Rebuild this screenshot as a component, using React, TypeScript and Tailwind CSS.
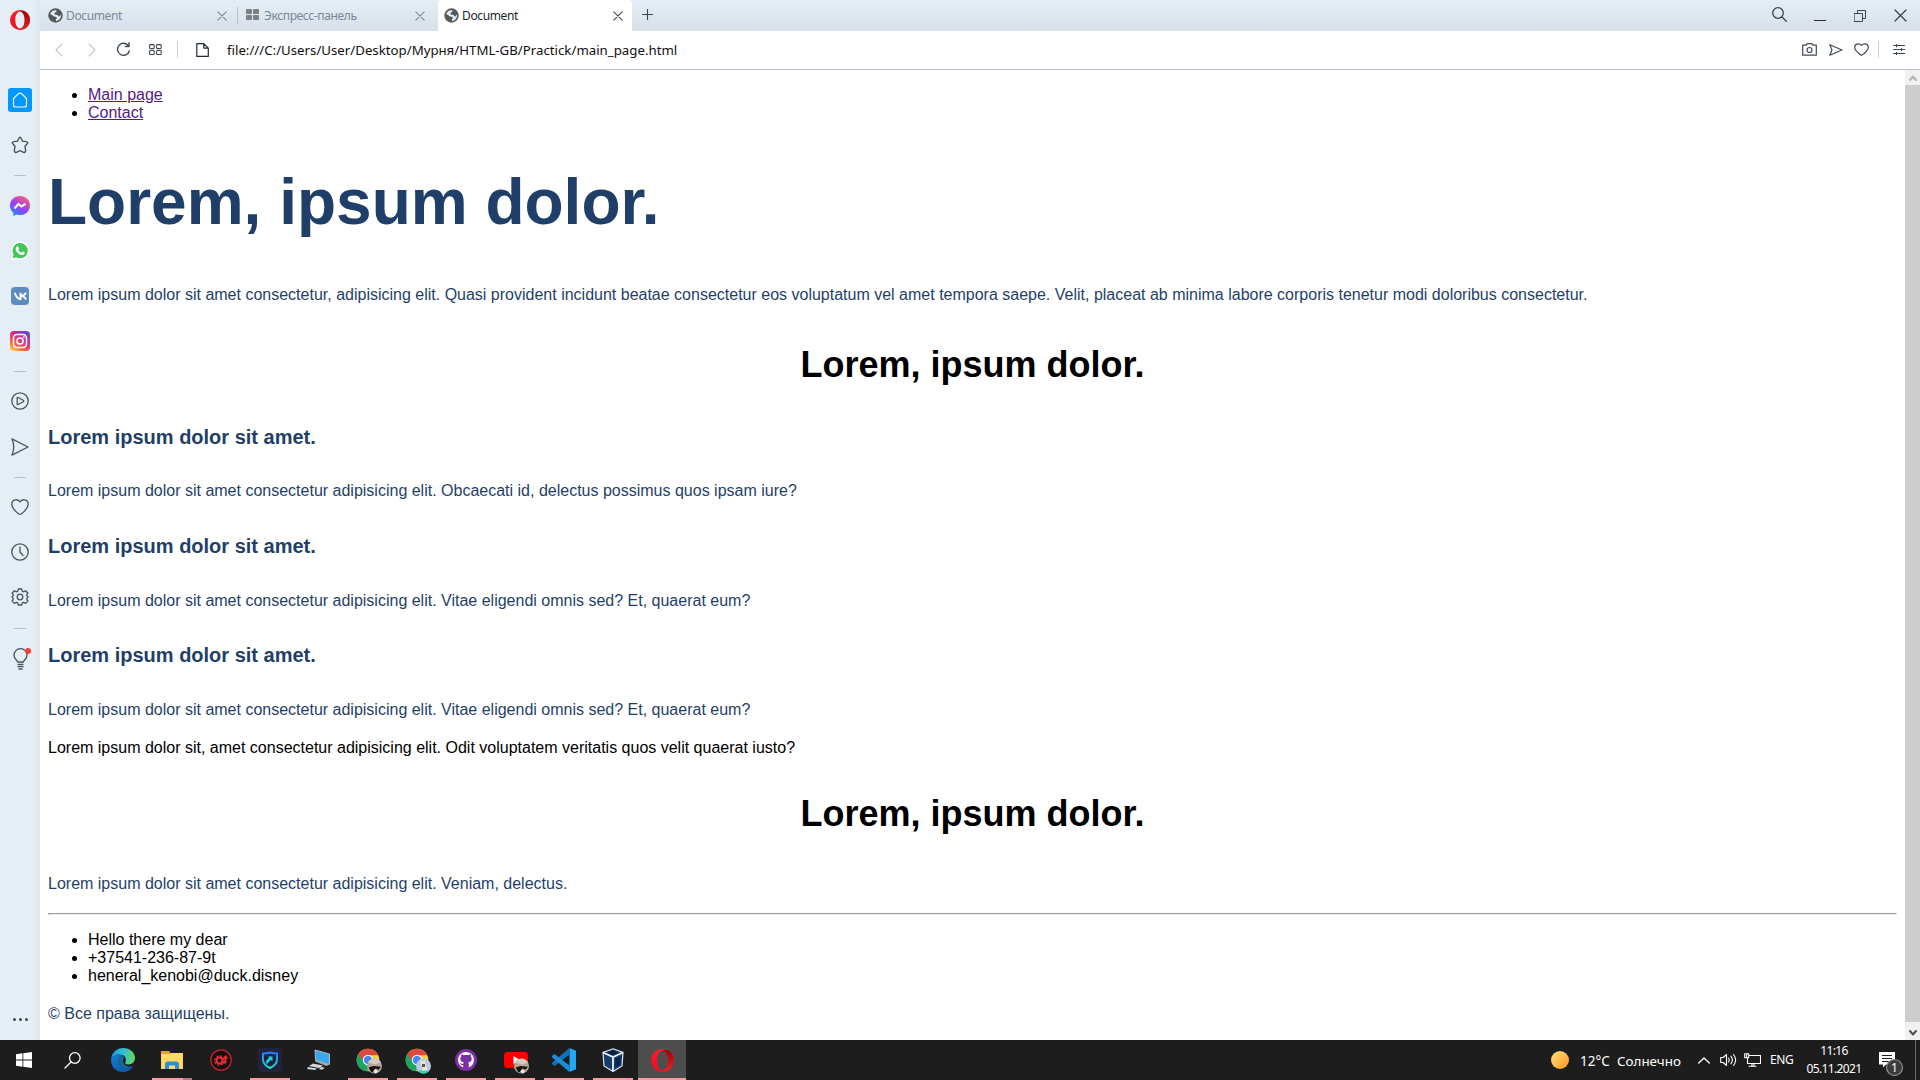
import React from "react";

const stroke = { fill: "none", stroke: "currentColor", strokeLinecap: "round", strokeLinejoin: "round" } as const;

function Svg({ s, w, h, vb, sw = 1.3, className = "", children }: { s?: number; w?: number; h?: number; vb?: string; sw?: number; className?: string; children: React.ReactNode }) {
  const W = w ?? s ?? 20, H = h ?? s ?? 20;
  return <svg width={W} height={H} viewBox={vb ?? `0 0 ${W} ${H}`} strokeWidth={sw} {...stroke} className={`block shrink-0 ${className}`}>{children}</svg>;
}

function OperaLogo({ s }: { s: number }) {
  return (
    <svg width={s} height={s} viewBox="0 0 20 20" className="block shrink-0">
      <defs>
        <linearGradient id="opA" x1="0" y1="0" x2="0" y2="1"><stop offset="0" stopColor="#ff1b2d" /><stop offset="1" stopColor="#e60f20" /></linearGradient>
        <linearGradient id="opB" x1="0" y1="0" x2="0" y2="1"><stop offset="0" stopColor="#9c0000" /><stop offset="1" stopColor="#d82a2a" /></linearGradient>
      </defs>
      <path fillRule="evenodd" fill="url(#opA)" d="M10 0a10 10 0 1 0 0 20a10 10 0 1 0 0-20ZM10 1.6c2.7 0 4.7 3.6 4.7 8.4s-2 8.4-4.7 8.4s-4.7-3.6-4.7-8.4s2-8.4 4.7-8.4Z" />
      <path fill="url(#opB)" d="M10 1.6c2-1.6 4.6-1 6.7 1A10 10 0 0 1 16.7 17.4c-2.1 2-4.7 2.6-6.7 1c2.7 0 4.7-3.6 4.7-8.4s-2-8.4-4.7-8.4Z" />
    </svg>
  );
}

function Globe() {
  return (
    <svg width="15" height="15" viewBox="0 0 15 15" className="block shrink-0">
      <circle cx="7.5" cy="7.5" r="7.2" fill="#55585b" />
      <path d="M2 6.6C3 3.5 5.2 2 8.2 2.3L8.6 3.6L6.3 5l.5 1.4l2.6.5l1.7 1.9l2-2.2c.2 3.500-2.100 6.100-5 6.400L7.700 11.500L9 10.300L8.400 8.900L5.400 8.300L3.800 6.500Z" fill="#e6edf4" />
    </svg>
  );
}

const X = ({ c }: { c: string }) => <Svg s={10} sw={1.1} className={c}><path d="M.8 .8L9.200 9.200M9.200 .8L.8 9.200" /></Svg>;

function TabBar() {
  return (
    <div className="flex h-[31px] shrink-0 items-stretch bg-linear-to-b from-[#e5edf5] to-[#d7dfe8] text-[12px] tracking-[-0.36px]">
      <div className="flex w-[197px] items-center pl-2 text-[#7a8796]">
        <Globe /><span className="ml-[3px] w-[151px]">Document</span><X c="text-[#7f8893]" />
      </div>
      <div className="my-[7px] w-px bg-[#b6c2cf]" />
      <div className="flex w-[200px] items-center pl-2 text-[#7a8796]">
        <svg width="13" height="11" viewBox="0 0 13 11" fill="#7c8085" className="mb-0.5 block"><rect width="6" height="5" rx="1" /><rect x="7" width="6" height="5" rx="1" /><rect y="6" width="6" height="5" rx="1" /><rect x="7" y="6" width="6" height="5" rx="1" /></svg>
        <span className="ml-[5px] w-[151px]">Экспресс-панель</span><X c="text-[#7f8893]" />
      </div>
      <div className="flex w-[194px] items-center rounded-t-sm bg-white pl-1.5 text-[#1c232c]">
        <Globe /><span className="ml-[3px] w-[151px]">Document</span><X c="text-[#3c434b]" />
      </div>
      <div className="flex items-center pb-0.5 pl-2.5 text-[#3c434b]"><Svg s={11} sw={1.1}><path d="M5.500 .5v10M.5 5.500h10" /></Svg></div>
      <div className="ml-auto flex items-center gap-7 pr-[13px] text-[#3c434b]">
        <Svg s={15} sw={1.3} className="-mr-px mb-[3px]"><circle cx="6" cy="6" r="5.300" /><path d="M10 10l4.300 4.300" /></Svg>
        <div className="mt-2.5 h-px w-3 bg-[#303030]" />
        <Svg s={12} sw={1}><path d="M.5 3.500h8v8h-8ZM3.500 3.500v-3h8v8h-3" /></Svg>
        <Svg s={13} sw={1.3}><path d="M1 1l11 11M12 1L1 12" /></Svg>
      </div>
    </div>
  );
}

function AddressBar() {
  return (
    <div className="flex h-[39px] shrink-0 items-center border-b border-[#b3bfca] bg-white pb-px text-[#414a54]">
      <Svg w={8} h={14} sw={1.1} className="ml-[15px] text-[#c2c6ca]"><path d="M7 1L1 7l6 6" /></Svg>
      <Svg w={8} h={14} sw={1.1} className="ml-[25px] text-[#c2c6ca]"><path d="M1 1l6 6l-6 6" /></Svg>
      <Svg s={15} sw={1.4} className="ml-5"><path d="M12 3.300A6 6 0 1 0 13.300 9M13 .8v3.700H9.300" /></Svg>
      <Svg w={13} h={11} sw={1.1} className="ml-[18px]"><rect x=".6" y=".6" width="4.600" height="4" rx=".8" /><rect x="7.600" y=".6" width="4.600" height="4" rx=".8" /><rect x=".6" y="6.500" width="4.600" height="4" rx=".8" /><rect x="7.600" y="6.500" width="4.600" height="4" rx=".8" /></Svg>
      <div className="ml-[15px] h-[17px] w-px bg-[#c9ced3]" />
      <Svg w={13} h={14} sw={1.2} className="ml-[18px] text-[#1f2a35]"><path d="M.8 .6h7l4.500 4.500v8.300H.8ZM7.800 .6v4.500h4.500" /></Svg>
      <span className="mt-0.5 ml-[18px] text-[13.25px] text-[#101010]">file:///C:/Users/User/Desktop/Мурня/HTML-GB/Practick/main_page.html</span>
      <div className="ml-auto flex items-center pr-[15px]">
        <Svg w={15} h={13} sw={1.2}><path d="M.7 2.200h3.500l1-1.500h4.600l1 1.500h3.500v10H.7Z" /><circle cx="7.500" cy="7" r="2.500" /></Svg>
        <Svg w={14} h={12} sw={1.2} className="ml-3"><path d="M.8 .8L13 6L.8 11.200L3 6Z" /></Svg>
        <Svg w={15} h={13} sw={1.2} className="ml-[11px]"><path d="M7.500 2.500C6 0 .7 0 .7 4.500c0 3.300 4 6 6.800 7.900c2.800-1.900 6.800-4.600 6.800-7.900C14.300 0 9 0 7.500 2.500Z" /></Svg>
        <div className="ml-[9px] h-[17px] w-px bg-[#c9ced3]" />
        <Svg w={12} h={11} sw={1.1} className="ml-3.5"><path d="M.5 1.500h11M.5 5.500h11M.5 9.500h11M3.500 .3v2.400M8.500 4.300v2.400M3.500 8.300v2.400" /></Svg>
      </div>
    </div>
  );
}

const Sep = ({ c }: { c: string }) => <div className={`h-px w-3 shrink-0 bg-[#b4c0cd] ${c}`} />;

function Sidebar() {
  return (
    <aside className="flex w-10 shrink-0 flex-col items-center bg-linear-to-r from-[#e5edf5] from-85% to-[#dce4ec] text-[#4a545f]">
      <div className="flex h-10 flex-col pt-2.5"><OperaLogo s={20} /></div>
      <div className="mt-12 flex h-6 w-6 shrink-0 items-center justify-center rounded-[3px] bg-[#0097ff] text-white"><Svg s={16} sw={1.2}><path d="M1.500 6.500L6.500 1.600Q8 .6 9.500 1.600L14.500 6.500V13Q14.500 15 12.500 15h-9Q1.500 15 1.500 13Z" /></Svg></div>
      <Svg s={18} sw={1.4} className="mt-6"><path d="M9 1.300Q9.700 1.300 10.200 2.500L11.500 5.100L15 5.600Q17.800 6.200 16 8L14 10.300L14.600 14Q14.800 17 12.500 16.300L9 14.700L5.500 16.300Q3.200 17 3.400 14L4 10.300L2 8Q.2 6.200 3 5.600L6.500 5.100L7.800 2.500Q8.300 1.300 9 1.300Z" /></Svg>
      <Sep c="mt-[21px]" />
      <svg width="20" height="20" viewBox="0 0 20 20" className="mt-5 block shrink-0"><defs><linearGradient id="ms" x1=".2" y1="1" x2=".8" y2="0"><stop stopColor="#1292ff" /><stop offset=".45" stopColor="#9a3cf8" /><stop offset="1" stopColor="#ff6070" /></linearGradient></defs><path fill="url(#ms)" d="M10 0C4.300 0 0 4 0 9.500c0 3 1.200 5.400 3.300 7V20l3-1.500c1 .4 2.300.6 3.700.6c5.700 0 10-4 10-9.600S15.700 0 10 0Z" /><path d="M4.500 12.400l4-4.400l3 2.500l4-2.700" fill="none" stroke="#fff" strokeWidth="2.200" /></svg>
      <svg width="18" height="18" viewBox="0 0 18 18" className="mt-[26px] block shrink-0"><path d="M.7 17.300l1.200-4.600A8.300 8.300 0 1 1 5.300 16Z" fill="#45c65a" stroke="#fff" strokeWidth="1.300" /><path fill="#fff" d="M6 4.500c1-.6 1.300 0 2 2c.2.800-.8 1-.6 1.600c.8 1.500 1.700 2 2.900 2.600c.6-.2 1-1.300 1.500-1.100l1.900 1c.3 2-1.700 2.700-3 2.400C7.500 12.300 5 9.700 4.700 7.200c0-1 .5-2.200 1.300-2.700Z" /></svg>
      <div className="mt-[27px] flex h-[18px] w-[18px] shrink-0 items-center justify-center rounded-[4px] bg-[#5c8bc0]"><svg width="13" height="8" viewBox="0 0 13 8" fill="none" stroke="#fff" strokeWidth="1.900"><path d="M.8 .8C2 4.500 3.800 7 6.500 7V.8M12 .8C11 2.500 9 3.700 7 3.900C9 4 11 5.500 12.200 7.400" /></svg></div>
      <svg width="20" height="20" viewBox="0 0 20 20" className="mt-[26px] block shrink-0"><defs><linearGradient id="ig" x1=".15" y1="1" x2=".8" y2="0"><stop stopColor="#ffc850" /><stop offset=".3" stopColor="#f66040" /><stop offset=".65" stopColor="#cd2d94" /><stop offset="1" stopColor="#5952d4" /></linearGradient></defs><rect width="20" height="20" rx="4" fill="url(#ig)" /><g fill="none" stroke="#fff" strokeWidth="1.500"><rect x="3.500" y="3.500" width="13" height="13" rx="3.500" /><circle cx="10" cy="10" r="3.100" /></g><circle cx="13.900" cy="6.100" r=".9" fill="#fff" /></svg>
      <Sep c="mt-5" />
      <Svg s={18} className="mt-5 mr-px"><circle cx="9" cy="9" r="8.200" /><path d="M6.200 6.200Q6.200 5.300 7 5.500L12.300 8.300Q13.300 9 12.300 9.700L7 12.500Q6.200 12.700 6.200 11.800Z" /></Svg>
      <Svg w={18} h={18} className="mt-7 mr-px"><path d="M1 .9L17 9L1 17.100Q4.500 9 1 .9Z" /></Svg>
      <Sep c="mt-[21px]" />
      <Svg w={18} h={16} className="mt-[21px] mr-px"><path d="M9 3C7.500 -.3 .8 -.3 .8 5.300C.8 9 4.500 12.500 7.800 15Q9 15.700 10.200 15C13.500 12.500 17.200 9 17.200 5.300C17.200-.3 10.500-.3 9 3Z" /></Svg>
      <Svg s={18} className="mt-7 mr-px"><circle cx="9" cy="9" r="8.200" /><path d="M9 4v5l3 3.600" /></Svg>
      <Svg s={18} className="mt-[27px] mr-px"><path d="M7.300 1h3.400l.5 2.200l1.400.6l2-1.100L16.900 5l-1.200 1.900l.5 1.300l.9.800l-.9.900l-.5 1.300l1.200 1.900l-2.300 2.300l-2-1.100l-1.400.6l-.5 2.100H7.300l-.5-2.100l-1.400-.6l-2 1.100l-2.300-2.300l1.200-1.900l-.5-1.300l-.9-.9l.9-.8l.5-1.300L1.100 5l2.300-2.300l2 1.100l1.400-.6Z" /><circle cx="9" cy="9" r="2.800" /></Svg>
      <Sep c="mt-[22px]" />
      <svg width="20" height="22" viewBox="0 0 20 22" className="mt-[19px] ml-px block shrink-0" {...stroke} strokeWidth="1.300"><path d="M7.500 14C7.500 12 4 11 4 7.200a6.500 6.500 0 0 1 13 0C17 11 13.500 12 13.500 14ZM8 16.500h5M8 18.700h5M9 21h3" transform="translate(-1 0)" /><circle cx="17.200" cy="3" r="3" fill="#ff3b30" stroke="none" /></svg>
      <div className="mt-auto mb-[19px] flex gap-[3px]"><i className="h-[3px] w-[3px] rounded-full bg-[#414a54]" /><i className="h-[3px] w-[3px] rounded-full bg-[#414a54]" /><i className="h-[3px] w-[3px] rounded-full bg-[#414a54]" /></div>
    </aside>
  );
}

function Page() {
  return (
    <main className="flow-root flex-1 bg-white px-2 font-['Liberation_Sans',Arial,sans-serif] text-[16px] leading-[18px] text-black">
      <ul className="mt-4 list-disc pl-10 text-black">
        <li><a className="text-[#551a8b] underline">Main page</a></li>
        <li><a className="text-[#551a8b] underline">Contact</a></li>
      </ul>
      <h1 className="mt-[43px] text-[64px] leading-[74px] font-bold text-[#1f3f68]">Lorem, ipsum dolor.</h1>
      <p className="mt-[47px] text-[#1f3f68]">Lorem ipsum dolor sit amet consectetur, adipisicing elit. Quasi provident incidunt beatae consectetur eos voluptatum vel amet tempora saepe. Velit, placeat ab minima labore corporis tenetur modi doloribus consectetur.</p>
      <h2 className="mt-10 text-center text-[36px] leading-[42px] font-bold">Lorem, ipsum dolor.</h2>
      <h3 className="mt-[39px] text-[20px] leading-[24px] font-bold text-[#1f3f68]">Lorem ipsum dolor sit amet.</h3>
      <p className="mt-[33px] text-[#1f3f68]">Lorem ipsum dolor sit amet consectetur adipisicing elit. Obcaecati id, delectus possimus quos ipsam iure?</p>
      <h3 className="mt-[34px] text-[20px] leading-[24px] font-bold text-[#1f3f68]">Lorem ipsum dolor sit amet.</h3>
      <p className="mt-[34px] text-[#1f3f68]">Lorem ipsum dolor sit amet consectetur adipisicing elit. Vitae eligendi omnis sed? Et, quaerat eum?</p>
      <h3 className="mt-[33px] text-[20px] leading-[24px] font-bold text-[#1f3f68]">Lorem ipsum dolor sit amet.</h3>
      <p className="mt-[34px] text-[#1f3f68]">Lorem ipsum dolor sit amet consectetur adipisicing elit. Vitae eligendi omnis sed? Et, quaerat eum?</p>
      <p className="mt-5">Lorem ipsum dolor sit, amet consectetur adipisicing elit. Odit voluptatem veritatis quos velit quaerat iusto?</p>
      <h2 className="mt-9 text-center text-[36px] leading-[42px] font-bold">Lorem, ipsum dolor.</h2>
      <p className="mt-10 text-[#1f3f68]">Lorem ipsum dolor sit amet consectetur adipisicing elit. Veniam, delectus.</p>
      <div className="mt-5 h-0.5 border border-[#9a9a9a] border-r-[#eee] border-b-[#eee]" />
      <ul className="mt-4 list-disc pl-10">
        <li>Hello there my dear</li>
        <li>+37541-236-87-9t</li>
        <li>heneral_kenobi@duck.disney</li>
      </ul>
      <p className="mt-5 text-[#1f3f68]">© Все права защищены.</p>
    </main>
  );
}

function Scrollbar() {
  return (
    <div className="flex w-[15px] shrink-0 flex-col bg-[#cdcdcd]">
      <div className="flex h-[15px] items-center justify-center bg-[#f0f0f0] text-[#b4b4b4]"><Svg w={8} h={6} sw={2}><path d="M1 5l3-3.500l3 3.500" /></Svg></div>
      <div className="flex-1" />
      <div className="flex h-[18px] items-center justify-center bg-[#f0f0f0] pt-1 text-[#505050]"><Svg w={8} h={6} sw={2}><path d="M1 1l3 3.500l3-3.500" /></Svg></div>
    </div>
  );
}

function Chrome({ dog = false }: { dog?: boolean }) {
  return (
    <svg width="28" height="28" viewBox="0 0 28 28" className="mt-0.5 ml-[3px]">
      <circle cx="12" cy="13" r="11.300" fill="#ffcd40" />
      <path d="M12 13L2.200 7.300A11.300 11.300 0 0 0 11 24.300L17 15Z" fill="#1da362" />
      <path d="M2.200 7.300A11.300 11.300 0 0 1 22.300 8.300H12L7 14Z" fill="#db4a3d" />
      <circle cx="12" cy="13" r="5.200" fill="#fff" /><circle cx="12" cy="13" r="4.200" fill="#4687f4" />
      {dog ? <g><circle cx="18.500" cy="19" r="7.500" fill="#b9cbe4" /><path d="M12.500 23.500h12a7.500 7.500 0 0 1-12 0Z" fill="#35d0b8" /><path d="M15.500 12l1.500 2h2l1-1.500v4l2 3v4h-5v-4l-1.500-3Z" fill="#e9e2cf" /><path d="M17 17h3v3h-3Z" fill="#5d503f" /></g> : <Face />}
    </svg>
  );
}
const Face = () => <g><circle cx="18.500" cy="19" r="7.500" fill="#b5a596" /><path d="M12 15.500a7.500 7.500 0 0 1 13 0l-6 2Z" fill="#d6ccc3" /><path d="M12.500 20.500l5-1.500l7.500.7l-2.500 3l-3-1.500l-1.500 4.500l-3-1Z" fill="#16130f" /><path d="M17 25l2-3l3 2.500l-2 2Z" fill="#efe9e0" /></g>;

function Task({ line = "", gap = "ml-px", active = false, children }: { line?: string; gap?: string; active?: boolean; children: React.ReactNode }) {
  return (
    <div className={`flex h-10 w-12 shrink-0 flex-col items-center ${gap} ${active ? "bg-[#4d4d4d]" : ""}`}>
      <div className="flex h-[38px] items-center justify-center pt-0.5">{children}</div>
      <div className={`h-0.5 ${line}`} />
    </div>
  );
}

const pink = "w-10 bg-[#ff9ba5]";

function Taskbar() {
  return (
    <footer className="flex h-10 shrink-0 items-center bg-[#1d1d1d] font-['Noto_Sans','Open_Sans',sans-serif] text-[12px] text-white">
      <Task gap="ml-0"><svg width="16" height="16" viewBox="0 0 16 16" fill="#fff"><path d="M0 2.200L6.500 1.300V7.600H0ZM7.300 1.200L16 0V7.600H7.300ZM0 8.400h6.500v6.300L0 13.800ZM7.300 8.400H16V16l-8.700-1.200Z" /></svg></Task>
      <Task gap="ml-0"><Svg s={17} sw={1.3}><circle cx="10.800" cy="6" r="5.300" /><path d="M7 10L1 16" /></Svg></Task>
      <Task gap="ml-[3px]">
        <svg width="24" height="24" viewBox="0 0 24 24"><defs><linearGradient id="edA" x1="0" y1=".4" x2="1" y2=".5"><stop stopColor="#1a9de0" /><stop offset=".55" stopColor="#35c1cf" /><stop offset="1" stopColor="#66dd52" /></linearGradient><linearGradient id="edB" x1="0" y1="0" x2="1" y2="1"><stop stopColor="#1380d8" /><stop offset="1" stopColor="#0c4fa0" /></linearGradient></defs><path fill="url(#edA)" d="M.2 10.500C1 4.500 6 0 12 0c7 0 12 4.800 12 10c0 4-3.200 6.400-6.400 6.400c-2.600 0-3.800-1-3.300-2c1.300-2.400.6-6-3-7.300C6.800 5.600 2 7.400.2 10.500Z" /><path fill="url(#edB)" d="M.1 11C2 6.500 8 5 11.500 7.400C7 8.500 6 13 8.500 16.500c3 4 9 4.200 13.500 2c-2 3.400-5.800 5.500-10 5.500C5 24-.4 18.500.1 11Z" /><path fill="#1a8fd4" d="M11.500 7.400C7 8.500 6 13 8.500 16.500c3 4 9 4.200 13.500 2c-5 .6-10-1.500-10-5.500c0-1.300.6-2 1.500-3Z" opacity=".65" /></svg>
      </Task>
      <Task line="w-10 bg-linear-to-r from-[#ff9ba5] from-78% to-[#bd7780] to-78%">
        <svg width="22" height="18" viewBox="0 0 22 18"><path d="M0 0h8l1.500 2H22v16H0Z" fill="#e5a50e" /><path d="M0 3h9l1-1h12v16H0Z" fill="#ffd868" /><path d="M4 18v-5q0-2.500 2.500-2.500h9Q18 10.500 18 13v5h-4v-3.500H8V18Z" fill="#2f8fd8" /></svg>
      </Task>
      <Task><svg width="22" height="22" viewBox="0 0 22 22" fill="none" stroke="#ed2b2f"><circle cx="11" cy="11" r="10.200" fill="#151010" stroke="#c9252b" strokeWidth="1.200" /><circle cx="9.500" cy="11.500" r="3" strokeWidth="2" /><circle cx="9.500" cy="11.500" r="4.600" strokeWidth="1.400" strokeDasharray="2 1.600" /><path d="M11 13.500h4.500V8.500" strokeWidth="1.800" /><path d="M12.500 9.500L15.500 6L18.500 9.500Z" fill="#ed2b2f" stroke="none" /></svg></Task>
      <Task line={pink}><svg width="24" height="24" viewBox="0 0 24 24"><defs><linearGradient id="sh" x1="0" y1="0" x2="0" y2="1"><stop stopColor="#2979ff" /><stop offset="1" stopColor="#19e4d4" /></linearGradient></defs><rect width="24" height="24" rx="4" fill="#20233a" /><path d="M5 5.500Q9 5.500 12 4.500Q15 5.500 19 5.500V12Q18.500 17 12 20Q5.500 17 5 12Z" fill="none" stroke="url(#sh)" strokeWidth="2" /><path d="M8.500 16.500l4-4.500l2 1V8.500h-4.500l1.200 1.300L8 13Z" fill="#1cd5e8" /></svg></Task>
      <Task><svg width="24" height="22" viewBox="0 0 24 22"><path d="M8 1L22.500 5V15.500L8.500 11Z" fill="#3ba7ee" stroke="#a9bac5" /><path d="M8.500 11L22.500 15.500l-3 1.500L8 12.500Z" fill="#a0aab0" /><path d="M6 14.500l10 2l-4 2.500L2 17ZM1 18l9 1.500l-2 1.500L0 20ZM14 18l4 .8l-3 2l-3-.8Z" fill="#d3d8dc" /></svg></Task>
      <Task line={pink}><Chrome /></Task>
      <Task line={pink}><Chrome dog /></Task>
      <Task line={pink}>
        <svg width="22" height="22" viewBox="0 0 22 22"><circle cx="11" cy="11" r="11" fill="#7b2fa5" /><path fill="#fff" d="M11 3a8 8 0 0 0-2.800 15.500V16c-2 .4-2.700-1-3.200-1.800c1.200-.3 1.500 1 3.300.6c.1-.6.300-1 .6-1.200C6.500 13.200 5.300 12 5.300 9.800c0-1 .3-1.700.9-2.300c-.2-.6-.2-1.500.1-2.300c.9 0 1.700.5 2.400 1c1.500-.4 3.100-.4 4.600 0c.7-.5 1.500-1 2.400-1c.3.800.3 1.700.1 2.300c.6.600.9 1.300.9 2.300c0 2.200-1.200 3.400-3.600 3.800c.5.500.7 1.200.7 2.200v2.700A8 8 0 0 0 11 3Z" /></svg>
      </Task>
      <Task line={pink}><svg width="28" height="28" viewBox="0 0 28 28" className="mt-0.5 ml-[3px]"><rect x="1" y="5" width="24" height="16" rx="3.500" fill="#fe0000" /><path d="M10.500 9v8l6.500-4Z" fill="#fff" /><Face /></svg></Task>
      <Task line={pink}><svg width="24" height="24" viewBox="0 0 24 24"><path d="M17.500 0L24 2.800V21.200L17.500 24Z" fill="#24a7f2" /><path d="M17.500 0V6.500L2.500 18L0 16V14.800Z" fill="#0d74b8" /><path d="M17.500 24V17.500L2.500 6L0 8V9.200Z" fill="#1b8fd8" /></svg></Task>
      <Task line={pink}><svg width="22" height="24" viewBox="0 0 22 24"><path d="M11 .8L21 4.500L20 18L11 23.500L2 18L1 4.500Z" fill="#173b6b" stroke="#dfe6ee" strokeWidth="1.200" /><path d="M1 4.500L11 9L21 4.500M11 9V23" stroke="#eef2f6" strokeWidth="1.800" fill="none" /><path d="M5 4.700L11 2.500L17 4.700L11 7Z" fill="#0a1d3c" /><path d="M13.500 10.500L18.500 8L18 16.500L13.500 19Z" fill="#0b2348" /></svg></Task>
      <Task active line="w-12 bg-[#ff9ba5]"><OperaLogo s={23} /></Task>
      <div className="ml-auto flex h-10 items-center">
        <div className="h-[18px] w-[18px] rounded-full bg-linear-to-br from-[#ffe27a] to-[#ff9500]" />
        <span className="ml-[11px] w-[37px] pt-0.5 text-[13.5px] whitespace-nowrap">12°C</span>
        <span className="w-[74px] pt-0.5 text-[13.4px] whitespace-nowrap">Солнечно</span>
        <Svg w={12} h={7} sw={1.3} className="ml-[7px]"><path d="M.7 6L6 1l5.300 5" /></Svg>
        <Svg w={17} h={14} sw={1.1} className="ml-2.5"><path d="M.7 4.500h2.500L6.500 1.500v11L3.200 9.500H.7ZM8.500 5q1.500 2 0 4M11 3.300q2.800 3.700 0 7.400M13.500 1.500q4.300 5.500 0 11" /></Svg>
        <Svg w={17} h={14} sw={1.1} className="ml-[7px]"><path d="M5.500 2.500h11v8H3.500V5.500M8 10.500v3M5 13.300h7M10 10.500v2.500M.7 .8h4v4h-4ZM2.700 .8v4" /></Svg>
        <span className="ml-[9px] w-[25px] text-[12px] tracking-[-0.4px]">ENG</span>
        <div className="ml-2.5 flex w-[58px] flex-col items-center text-[12px] leading-[18px] tracking-[-0.65px]"><span>11:16</span><span>05.11.2021</span></div>
        <svg width="26" height="26" viewBox="0 0 26 26" className="mt-1.5 ml-[15px] block"><path d="M1 2h16v12.500H8l-3 3v-3H1Z" fill="#fff" /><path d="M4 5.500h10M4 8.500h10M4 11.500h7" stroke="#1d1d1d" strokeWidth="1.200" /><circle cx="16.500" cy="17.500" r="8" fill="#3c3c3c" stroke="#8f8f8f" strokeWidth="1.200" /><text x="16.500" y="21.700" fontSize="12" fill="#fff" textAnchor="middle">1</text></svg>
        <div className="ml-[11px] h-10 w-px bg-[#6b6b6b]" />
        <div className="w-1" />
      </div>
    </footer>
  );
}

export default function App() {
  return (
    <div className="flex h-[1080px] w-[1920px] flex-col overflow-hidden bg-white font-['Noto_Sans','Open_Sans',sans-serif]">
      <div className="flex min-h-0 flex-1">
        <Sidebar />
        <div className="flex min-w-0 flex-1 flex-col">
          <TabBar />
          <AddressBar />
          <div className="flex min-h-0 flex-1"><Page /><Scrollbar /></div>
        </div>
      </div>
      <Taskbar />
    </div>
  );
}
